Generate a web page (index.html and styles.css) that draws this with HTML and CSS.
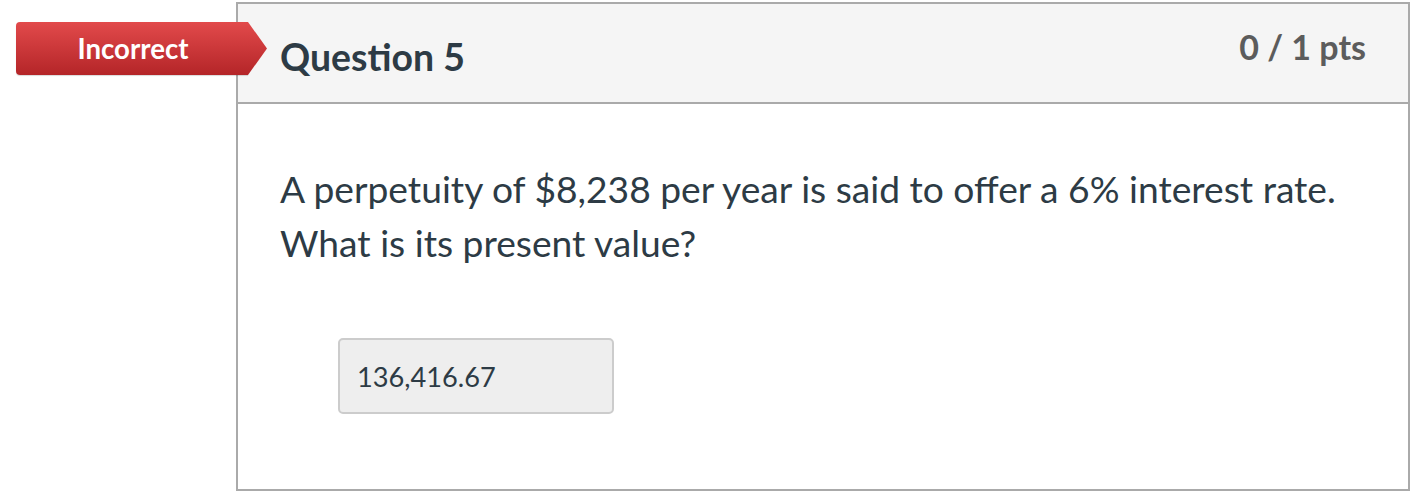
FILE: index.html
```html
<!DOCTYPE html>
<html>
<head>
<meta charset="utf-8">
<link rel="stylesheet" href="styles.css">
</head>
<body>
<div class="page">
  <div class="card">
    <div class="badge">
      <span class="badge-text">Incorrect</span>
      <svg class="badge-arrow" width="20" height="53" viewBox="0 0 20 53">
        <defs>
          <linearGradient id="g" x1="0" y1="0" x2="0" y2="1">
            <stop offset="0" stop-color="#e24a4b"/>
            <stop offset="1" stop-color="#b42528"/>
          </linearGradient>
        </defs>
        <polygon points="0,0 1,0 20,26.5 1,53 0,53" fill="url(#g)"/>
      </svg>
    </div>
    <div class="header">
      <h2 class="title">Question 5</h2>
      <div class="pts">0 / 1 pts</div>
    </div>
    <div class="body">
      <p class="question">A perpetuity of $8,238 per year is said to offer a 6% interest rate. What is its present value?</p>
      <div class="answer">136,416.67</div>
    </div>
  </div>
</div>
</body>
</html>
```
FILE: styles.css
```css
html, body {
  margin: 0;
  padding: 0;
  background: #fff;
}
body {
  font-family: Lato, "Open Sans", sans-serif;
  color: #2d3b45;
}
.page {
  padding: 2px 16px 0 236px;
}
.card {
  position: relative;
  width: 1170px;
  height: 485px;
  border: 2px solid #aaaaaa;
  display: flex;
  flex-direction: column;
}
.badge {
  position: absolute;
  left: -222px;
  top: 18px;
  height: 53px;
  width: 232px;
  display: flex;
  align-items: center;
  justify-content: center;
  background: linear-gradient(#e24a4b, #b42528);
  border-radius: 4px 0 0 4px;
  box-shadow: 0 1px 1px rgba(0,0,0,0.15);
}
.badge-text {
  color: #fff;
  font-weight: 700;
  font-size: 27.6px;
  line-height: 32px;
  margin-left: 2px;
  margin-top: 1px;
}
.badge-arrow {
  position: absolute;
  right: -19px;
  top: 0;
}
.header {
  background: #f5f5f5;
  border-bottom: 2px solid #aaaaaa;
  display: flex;
  justify-content: space-between;
  align-items: flex-start;
  padding: 0 42px;
  box-sizing: border-box;
  height: 100px;
  flex: none;
}
.title {
  margin: 31px 0 0 0;
  font-size: 37.4px;
  font-weight: 700;
  line-height: 44px;
  color: #2d3b45;
}
.pts {
  margin-top: 23px;
  font-size: 34px;
  font-weight: 700;
  line-height: 40px;
  color: #5c5c5c;
}
.body {
  padding: 58px 42px 0 42px;
}
.question {
  margin: 0;
  font-size: 37.2px;
  line-height: 54px;
}
.answer {
  margin: 68px 0 0 58px;
  width: 276px;
  height: 76px;
  box-sizing: border-box;
  background: #eeeeee;
  border: 2px solid #cccccc;
  border-radius: 5px;
  font-size: 27.2px;
  padding: 0 0 0 17px;
  display: flex;
  align-items: center;
}
```
